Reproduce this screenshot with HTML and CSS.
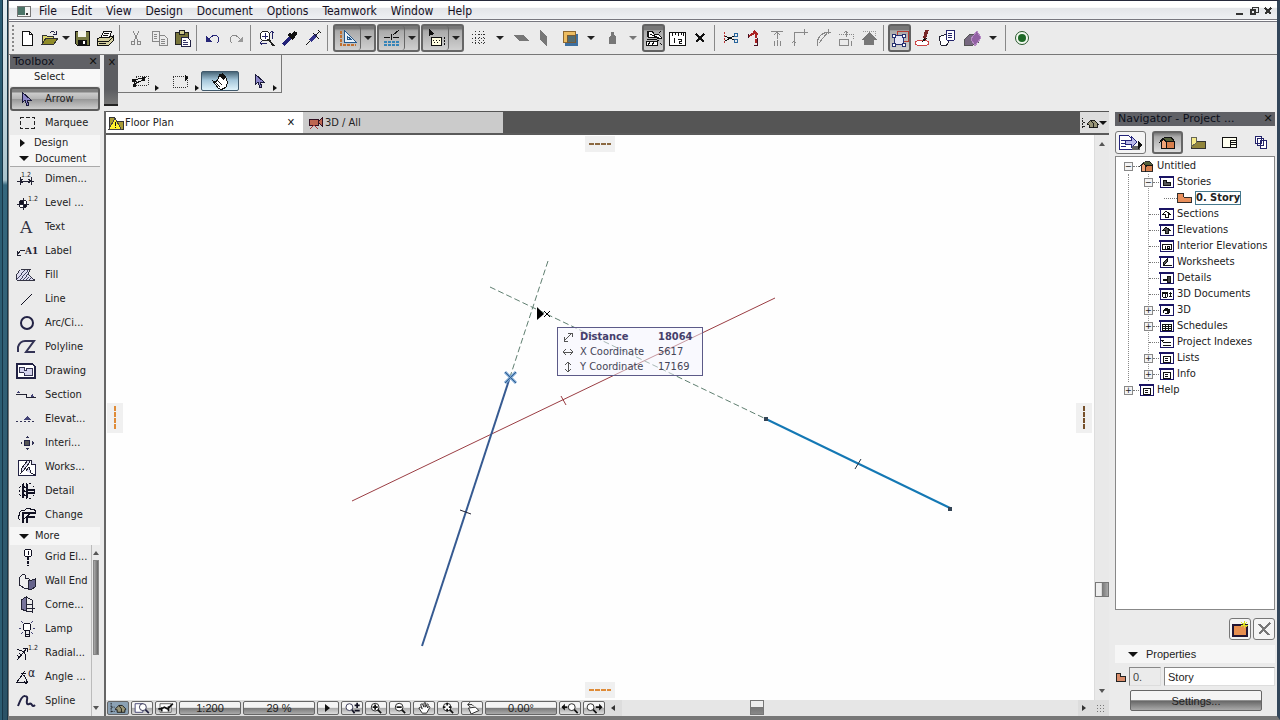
FILE: index.html
```html
<!DOCTYPE html>
<html lang="en">
<head>
  <meta charset="UTF-8" />
  <meta name="viewport" content="width=device-width, initial-scale=1.0" />
  <title>Untitled - Floor Plan</title>
  <link rel="stylesheet" href="styles.css">
</head>
<body>

  <!-- Shared icon shapes -->
  <svg class="defs" aria-hidden="true">
    <symbol id="house" viewBox="0 0 16 14">
      <path d="M6 6h9v7H6z" fill="#d87f4c" stroke="#111"/>
      <path d="M2 7 4 4l3 3v6H2z" fill="#f2a477" stroke="#111"/>
      <path d="m4 4 2-2h6l3 4H7z" fill="#54603a" stroke="#111"/>
      <path d="m0 8 4-5 4 5" fill="none" stroke="#111"/>
    </symbol>
    <symbol id="story" viewBox="0 0 16 12">
      <path d="M1 1h6v4h8v6H1z" fill="#e88f5c" stroke="#222"/>
    </symbol>
    <symbol id="frame" viewBox="0 0 15 12">
      <path d="M1 1h13v10H1z" fill="#fff" stroke="#1a1464"/>
      <path d="M0 1h15" stroke="#1a1464" stroke-width="2"/>
    </symbol>
    <symbol id="cursor" viewBox="0 0 18 18">
      <path d="M5 2v11l3-3 2 6 2-1-2-5h4z" fill="#8c85c8" stroke="#1a1a3a"/>
    </symbol>
    <symbol id="lens" viewBox="0 0 18 14">
      <circle cx="8" cy="6" r="4.500" fill="#fff" stroke="#111"/>
      <path d="m11 9 4 4" stroke="#111" stroke-width="2"/>
    </symbol>
    <symbol id="homemap" viewBox="0 0 20 14">
      <path d="M2 1v11M2 6h4M2 11h4" stroke="#111" stroke-dasharray="2 1"/>
      <path d="m7 8 4-4h4l4 4v1h-1v3H9V9H7z" fill="#999577" stroke="#111"/>
      <path d="m11 4 3 4v4" fill="none" stroke="#111"/>
    </symbol>
    <symbol id="snap" viewBox="0 0 12 12">
      <path d="m2 2 8 8M10 2l-8 8" stroke="#111" stroke-width="2"/>
    </symbol>
  </svg>

  <div class="window">
    <header class="menubar">
      <svg class="app-icon" width="16" height="12" viewBox="0 0 16 12"><path d="M1 1h13v10H1z" fill="#f4f4f4" stroke="#777"/><path d="M2 2h7v8H2z" fill="#4c7468"/><path d="M11 8v2" stroke="#333" stroke-width="2"/></svg>
      <nav class="menus">
        <a href="#">File</a>
        <a href="#">Edit</a>
        <a href="#">View</a>
        <a href="#">Design</a>
        <a href="#">Document</a>
        <a href="#">Options</a>
        <a href="#">Teamwork</a>
        <a href="#">Window</a>
        <a href="#">Help</a>
      </nav>
      <div class="win-buttons">
        <button aria-label="Minimize"><svg width="10" height="10" viewBox="0 0 10 10"><path d="M1 8h7" stroke="#333" stroke-width="2"/></svg></button>
        <button aria-label="Restore"><svg width="10" height="10" viewBox="0 0 10 10"><path d="M3 3V1h6v5H7" fill="none" stroke="#333"/><path d="M2 4h4v4H2z" fill="none" stroke="#333" stroke-width="2"/></svg></button>
        <button aria-label="Close"><svg width="10" height="10" viewBox="0 0 10 10"><path d="m2 2 6 6M8 2 2 8" stroke="#333" stroke-width="2"/></svg></button>
      </div>
    </header>

    <div class="toolbar">
      <span class="handle"></span>
      <button class="tb" aria-label="New"><svg viewBox="0 0 18 18"><path d="M4 2h7l3 3v11H4z" fill="#fff" stroke="#111"/><path d="M11 2v3h3" fill="none" stroke="#111"/></svg></button>
      <button class="tb" aria-label="Open"><svg viewBox="0 0 18 18"><path d="M1 15V6h4l1 1h6v3" fill="#dcd66c" stroke="#333"/><path d="m1 15 4-6h12l-4 6z" fill="#8f8b28" stroke="#333"/><path d="M9 4q3-3 5 0M15 2v3h-3" fill="none" stroke="#224"/></svg></button>
      <button class="drop drop-small" aria-label="Recent files"></button>
      <button class="tb" aria-label="Save"><svg viewBox="0 0 18 18"><path d="M2 2h14v14H4l-2-2z" fill="#777a42" stroke="#111"/><path d="M5 2h8v6H5z" fill="#f4f4ea"/><path d="M5 11h9v5H5z" fill="#111"/><path d="M11 12v3" stroke="#fff" stroke-width="2"/></svg></button>
      <button class="tb" aria-label="Print"><svg viewBox="0 0 18 18"><path d="M5 8 8 2h8l-3 7z" fill="#fff" stroke="#111"/><path d="m1 10 4-2h9l3-1v5l-4 4H1z" fill="#d5d0a0" stroke="#111"/><path d="M1 12h12l4-4M8 4h5M7 6h5M3 14h7" fill="none" stroke="#111"/></svg></button>
      <span class="sep"></span>
      <button class="tb" aria-label="Cut"><svg viewBox="0 0 18 18" class="dim"><path d="m6 2 5 10M12 2 7 12"/><circle cx="6" cy="14" r="2"/><circle cx="12" cy="14" r="2"/></svg></button>
      <button class="tb" aria-label="Copy"><svg viewBox="0 0 18 18" class="dim"><path d="M2 2h7v10H2zM9 6h5l3 3v7H9zM4 5h3M4 7h3M4 9h3M11 10h4M11 12h4M11 14h4"/></svg></button>
      <button class="tb" aria-label="Paste"><svg viewBox="0 0 18 18"><path d="M2 3h13v12H2z" fill="#77743a" stroke="#222"/><path d="M6 1h5v4H6z" fill="#cfc98c" stroke="#222"/><path d="M8 8h6l3 3v6H8z" fill="#fff" stroke="#224"/><path d="M10 11h3M10 13h5M10 15h5" stroke="#336"/></svg></button>
      <span class="sep"></span>
      <button class="tb" aria-label="Undo"><svg viewBox="0 0 18 18"><path d="M5 10q4-5 8-3 4 3 0 7" fill="none" stroke="#262678"/><path d="M2 7v6h6z" fill="#262678"/></svg></button>
      <button class="tb" aria-label="Redo"><svg viewBox="0 0 18 18"><path d="M13 10Q9 5 5 7q-4 3 0 7" fill="none" stroke="#888"/><path d="M16 7v6h-6z" fill="#999"/></svg></button>
      <span class="sep"></span>
      <button class="tb" aria-label="Find and select"><svg viewBox="0 0 18 18"><circle cx="7" cy="7" r="5" fill="#fff" stroke="#222"/><path d="m10 10 6 7" stroke="#222" stroke-width="2"/><path d="M4 7h6M7 4v6M2 14h7M14 2v8M12 4l2-2 2 2M4 12l-2 2 2 2" fill="none" stroke="#226"/></svg></button>
      <button class="tb" aria-label="Pick up parameters"><svg viewBox="0 0 18 18"><path d="m2 16 8-8" stroke="#222278" stroke-width="3"/><path d="m8 5 5 5M11 8l4-5" stroke="#111" stroke-width="4"/></svg></button>
      <button class="tb" aria-label="Inject parameters"><svg viewBox="0 0 18 18"><path d="m2 16 5-5" stroke="#111"/><path d="m6 12 6-6" stroke="#33338a" stroke-width="4"/><path d="m9 4 6 6M12 6l4-4M14 1l3 3" stroke="#111"/></svg></button>
      <span class="sep"></span>

      <div class="pair">
        <button class="on" aria-label="Guide lines"><svg viewBox="0 0 18 18"><path d="M2 2v14h15" fill="none" stroke="#c07030" stroke-width="2" stroke-dasharray="3 1"/><path d="M5 1v12h12z" fill="#e8f0f8" stroke="#24588c"/><path d="M8 7v3h4z" fill="none" stroke="#24588c"/></svg></button>
        <button class="drop" aria-label="Guide line options"></button>
      </div>
      <div class="pair">
        <button class="on" aria-label="Snap guides"><svg viewBox="0 0 18 18"><path d="M1 8h6M10 8h6M8 5v6M10 6l6-5" stroke="#111"/><path d="M1 13h16M1 16h16" stroke="#3584b8" stroke-width="2" stroke-dasharray="3 1"/></svg></button>
        <button class="drop" aria-label="Snap guide options"></button>
      </div>
      <div class="pair">
        <button class="on" aria-label="Tracker"><svg viewBox="0 0 18 18"><path d="M2 0v7l5-2z" fill="#111"/><path d="M4 8h10v8H4z" fill="#fffde0" stroke="#111"/><path d="M6 11h1m2 0h1m2 0h1M7 13h1m2 0h1" stroke="#111"/><path d="M17 8v8" stroke="#111" stroke-dasharray="2 1"/></svg></button>
        <button class="drop" aria-label="Tracker options"></button>
      </div>

      <button class="tb push" aria-label="Grid snap"><svg viewBox="0 0 18 18"><path d="M2 5h14M2 9h14M2 13h14M5 2v14M9 2v14M13 2v14" stroke="#333" stroke-dasharray="1 2"/></svg></button>
      <button class="drop" aria-label="Grid options"></button>
      <button class="tb" aria-label="Editing plane"><svg viewBox="0 0 18 18"><path d="M1 6h10l6 6H7z" fill="#777"/></svg></button>
      <button class="tb" aria-label="Vertical plane"><svg viewBox="0 0 18 18"><path d="m5 1 7 6v10l-7-6z" fill="#777"/></svg></button>
      <button class="tb push" aria-label="Trace"><svg viewBox="0 0 18 18"><path d="M4 5h13v12H4z" fill="#3d6fa0"/><path d="M2 2h12v11H2z" fill="#edbd61" stroke="#8c6831"/><path d="M6 6h8v7H6z" fill="#526b70" stroke="#765a35"/></svg></button>
      <button class="drop" aria-label="Trace options"></button>
      <button class="tb" aria-label="Weight"><svg viewBox="0 0 18 18"><path d="M8 3h3v3l2 2v7H6V8l2-2z" fill="#777"/></svg></button>
      <button class="drop faint" aria-label="Weight options"></button>
      <button class="tb on" aria-label="Suspend groups"><svg viewBox="0 0 18 18"><path d="M2 2h5l2 3h4l4 4-2 1-5-2H3z" fill="#fff" stroke="#111"/><path d="M3 2v6M5 5l9 4M2 10h8l4 2" fill="none" stroke="#111"/><path d="M1 12h11v4H1z" fill="#fff" stroke="#111"/><path d="m3 16 3-4M7 16l3-4M14 4l2-2M15 14l2 2" stroke="#111"/></svg></button>
      <button class="tb" aria-label="Measure"><svg viewBox="0 0 18 18"><path d="M1 3h16v13H1z" fill="#fff" stroke="#111"/><path d="M4 3v4M7 3v3M10 3v4M13 3v3M15 3v4M6 9v5M10 10h3v2h-2v2h3" fill="none" stroke="#111"/></svg></button>
      <button class="tb" aria-label="Snap to point"><svg class="small-icon"><use href="#snap"/></svg></button>
      <span class="sep"></span>
      <button class="tb" aria-label="Split"><svg viewBox="0 0 18 18"><path d="M2 3v12" stroke="#b33" stroke-dasharray="2 1"/><path d="m3 7 9 4M3 12l9-5" stroke="#111"/><circle cx="14" cy="6" r="2" fill="none" stroke="#27659c"/><circle cx="14" cy="12" r="2" fill="none" stroke="#27659c"/></svg></button>
      <button class="tb" aria-label="Adjust"><svg viewBox="0 0 18 18"><path d="m4 7 7-4M9 2l4 4M11 5v4M11 10v4" stroke="#a22" stroke-width="2"/><path d="M3 5v4M9 16h3V9" fill="none" stroke="#412"/></svg></button>
      <button class="tb" aria-label="Elevate"><svg viewBox="0 0 18 18" class="dim"><path d="M3 2h12M9 3v7M6 6l3-3 3 3M6 12v5M9 11v6M12 12v5"/></svg></button>
      <button class="tb" aria-label="Intersect"><svg viewBox="0 0 18 18" class="dim"><path d="M3 17V3h14M1 14l2-2 2 2M13 0v6"/></svg></button>
      <button class="tb" aria-label="Fillet"><svg viewBox="0 0 18 18" class="dim"><path d="M3 17Q3 3 17 3M5 14l9-11M3 12v5M14 0v5"/></svg></button>
      <button class="tb" aria-label="Resize"><svg viewBox="0 0 18 18" class="dim"><path d="M2 10h9v6H2zM14 12v5M9 2v6M7 4l2-2 2 2"/><path d="M2 5h14v6" stroke-dasharray="1 1"/></svg></button>
      <button class="tb" aria-label="Roof"><svg viewBox="0 0 18 18"><path d="m1 11 8-8 8 8h-3v5H4v-5z" fill="#777"/><path d="M3 2h12v5" fill="none" stroke="#999" stroke-dasharray="1 1"/></svg></button>
      <span class="sep"></span>
      <button class="tb on" aria-label="Edit selection"><svg viewBox="0 0 18 18"><path d="M6 2h11v10H6z" fill="none" stroke="#b53b32"/><path d="M3 6h9v9H3z" fill="#e5e5f4" stroke="#273070"/><path d="M1 5h3v3H1zM1 14h3v3H1zM11 14h3v3h-3zM11 5h3v3h-3z" fill="#fff" stroke="#273070"/></svg></button>
      <button class="tb" aria-label="Markup"><svg viewBox="0 0 18 18"><ellipse cx="8" cy="14" rx="7" ry="3" fill="#fff" stroke="#c44"/><path d="m8 13 2-4h3l-3 3z" fill="#111"/><path d="m9 9 2-8h4l-3 9z" fill="#762626"/></svg></button>
      <button class="tb" aria-label="Publish"><svg viewBox="0 0 18 18"><path d="m2 8 7-3 3 8-3 4-5-1z" fill="#fff" stroke="#223"/><path d="M9 1h8v10l-6 1-2-2z" fill="#fff" stroke="#24246b"/><path d="M11 4h4M11 6h4M11 8h4" stroke="#24246b"/></svg></button>
      <button class="tb push" aria-label="Section box"><svg viewBox="0 0 18 18"><path d="m1 11 6-6 7 2 2 6-6 3H1z" fill="#776880" stroke="#555"/><path d="m8 10 6-8 4 7-6 8z" fill="#9261a3" stroke="#b68ac4"/></svg></button>
      <button class="drop" aria-label="Section box options"></button>
      <span class="sep"></span>
      <button class="tb" aria-label="Online"><svg viewBox="0 0 18 18" class="smooth"><circle cx="9" cy="9" r="6.500" fill="#f3faf1" stroke="#29572c"/><circle cx="9" cy="9" r="4" fill="#1e6a27"/></svg></button>
    </div>

    <div class="workspace">
      <aside class="toolbox">
        <div class="panel-title"><span>Toolbox</span><button aria-label="Close toolbox">✕</button></div>
        <h2 class="select-title">Select</h2>
        <button class="tool active"><svg><use href="#cursor"/></svg>Arrow</button>
        <button class="tool"><svg viewBox="0 0 20 18"><path d="M4 3h14v11H4z" fill="none" stroke="#222" stroke-dasharray="4 2"/></svg>Marquee</button>
        <button class="group"><span class="tri-right"></span>Design</button>
        <button class="group last"><span class="tri-down"></span>Document</button>

        <button class="tool"><svg viewBox="0 0 20 18"><text x="5" y="7" class="tiny">1.2</text><path d="M1 11h17M4 7v8M15 7v8M7 9l-3 2 3 2M12 9l3 2-3 2" fill="none" stroke="#223"/></svg>Dimen...</button>
        <button class="tool"><svg viewBox="0 0 20 18"><circle cx="7" cy="10" r="4" fill="#fff" stroke="#223"/><path d="M7 6v4H3q0-4 4-4zM7 10h4q0 4-4 4zM1 10h12M7 4v12" fill="#112" stroke="#223"/><text x="12" y="7" class="tiny">1.2</text></svg>Level ...</button>
        <button class="tool"><svg viewBox="0 0 20 18"><text x="4" y="15" class="letter">A</text></svg>Text</button>
        <button class="tool"><svg viewBox="0 0 20 18"><path d="m1 13 4-5h4M1 9v4h4" fill="none" stroke="#223"/><text x="9" y="12" class="label-a">A1</text></svg>Label</button>
        <button class="tool"><svg viewBox="0 0 22 18"><path d="M1 15V8l4-5h11l-3 5 8 7z" fill="#dddcf0" stroke="#223"/><path d="m1 14 9-11M4 15 14 3M8 15l6-8M11 15l4-4M14 15l3-3" stroke="#335"/></svg>Fill</button>
        <button class="tool"><svg viewBox="0 0 20 18"><path d="M5 15 16 4" stroke="#112"/></svg>Line</button>
        <button class="tool"><svg viewBox="0 0 20 18" class="smooth"><circle cx="11" cy="9" r="6" fill="none" stroke="#224" stroke-width="2"/></svg>Arc/Ci...</button>
        <button class="tool"><svg viewBox="0 0 20 18" class="smooth"><path d="M2 14V9q2-6 7-6h9l-8 11h9" fill="none" stroke="#335" stroke-width="2"/></svg>Polyline</button>
        <button class="tool"><svg viewBox="0 0 22 18"><path d="M1 1h17l3 3v13H1z" fill="#fff" stroke="#224" stroke-width="2"/><path d="M4 5h5v3h3V6h6v8H9v-3H4z" fill="#d4d3ed" stroke="#224"/></svg>Drawing</button>
        <button class="tool"><svg viewBox="0 0 22 18"><path d="M0 8h12v4h10" fill="none" stroke="#112"/><path d="m1 7 2-3 2 3zM16 11l2-3 2 3z" fill="#447"/></svg>Section</button>
        <button class="tool"><svg viewBox="0 0 20 18"><path d="M0 11h20" stroke="#335" stroke-dasharray="2 2"/><path d="m7 10 4-4 4 4z" fill="#447"/></svg>Elevat...</button>
        <button class="tool"><svg viewBox="0 0 20 18"><circle cx="11" cy="9" r="3" fill="#555" stroke="#224"/><path d="m9 4 2-2 2 2zM9 14l2 2 2-2zM6 7 4 9l2 2zM16 7l2 2-2 2z" fill="#335"/></svg>Interi...</button>
        <button class="tool"><svg viewBox="0 0 20 18"><path d="M2 2h13l4 4v11H2z" fill="#fff" stroke="#224"/><path d="m15 2v4h4M5 15l1-5 6-8 2 2-7 9zM10 13l3-4 2 6 4 2" fill="#dddcf0" stroke="#223"/></svg>Works...</button>
        <button class="tool"><svg viewBox="0 0 20 18"><circle cx="11" cy="9" r="8" fill="none" stroke="#112" stroke-dasharray="2 2"/><path d="M7 2v14M11 2v14M11 8h8M11 11h8" stroke="#112" stroke-width="2"/><path d="m7 4 3 2M7 8l3 2M7 12l3 2" stroke="#112"/></svg>Detail</button>
        <button class="tool"><svg viewBox="0 0 20 18"><path d="M4 14q-4-3 0-5-1-5 4-4 3-5 8-1 4-1 4 3" fill="none" stroke="#112"/><path d="M7 17V7h13M11 17v-6h8" fill="none" stroke="#112" stroke-width="2"/><path d="m7 14 4-4M10 11l5-4" stroke="#112"/></svg>Change</button>

        <button class="group more"><span class="tri-down"></span>More</button>
        <div class="more-tools">
          <div class="more-list">
            <button class="tool"><svg viewBox="0 0 20 18"><circle cx="12" cy="5" r="4" fill="#fff" stroke="#112"/><path d="M12 3v4" stroke="#112"/><path d="M12 9v9" stroke="#112" stroke-width="2" stroke-dasharray="3 1"/></svg>Grid El...</button>
            <button class="tool"><svg viewBox="0 0 20 18"><path d="m3 6 4-4 2 1v3l4 1v9l-3 1-7-4z" fill="#eee" stroke="#223"/><path d="M12 8h4l3-1v8l-3 2h-4z" fill="#66648c" stroke="#223"/></svg>Wall End</button>
            <button class="tool"><svg viewBox="0 0 20 18"><path d="m5 4 5-3v14l-5-2z" fill="#77749b" stroke="#223"/><path d="m10 1 6 3v12l-6-1M11 8h5M11 12h8" fill="none" stroke="#223"/></svg>Corne...</button>
            <button class="tool"><svg viewBox="0 0 20 18"><circle cx="11" cy="7" r="4" fill="#fff" stroke="#112"/><path d="M9 11v5h4v-5M9 14h4" fill="none" stroke="#112"/><path d="m5 1 2 2M17 1l-2 2M3 8h2M17 8h2M5 14l2-2M17 14l-2-2" stroke="#447"/></svg>Lamp</button>
            <button class="tool"><svg viewBox="0 0 20 18"><path d="M1 6q9-1 9 10M1 16l10-12M7 4h4v4M1 11l3 3M3 9l3 3" fill="none" stroke="#112"/><text x="12" y="6" class="tiny">1.2</text></svg>Radial...</button>
            <button class="tool"><svg viewBox="0 0 20 18"><path d="M9 3 1 14h10M6 6q5 3 4 8M5 5h5M8 13l2 3 2-3" fill="none" stroke="#112"/><text x="12" y="9" class="alpha">α</text></svg>Angle ...</button>
            <button class="tool"><svg viewBox="0 0 20 18" class="smooth"><path d="M2 14q4-11 7-10 3 0 2 4-1 5 2 4 2-1 3 1t3 0" fill="none" stroke="#224" stroke-width="2"/></svg>Spline</button>
          </div>
          <div class="mini-scroll"><span class="up"></span><span class="mini-thumb"></span><span class="down"></span></div>
        </div>
      </aside>

      <div class="main">
        <div class="infobox">
          <div class="info-handle"><button aria-label="Close info box">✕</button></div>
          <div class="info-tools">
            <button class="info" aria-label="Single element"><svg viewBox="0 0 20 18"><path d="M5 4h12v9H5z" fill="none" stroke="#333" stroke-dasharray="1 1"/><path d="M3 14V8l12-3M3 12l9-4" fill="none" stroke="#111"/><path d="M1 7h4v3H1zM2 12h3v3H2zM11 6h3v3h-3z" fill="#111"/></svg></button>
            <button class="info" aria-label="Marquee area"><svg viewBox="0 0 20 18"><path d="M2 4h14v11H2z" fill="none" stroke="#333" stroke-dasharray="1 1"/><path d="m14 3 4 3-4 3z" fill="#111"/></svg></button>
            <button class="info pressed" aria-label="Quick selection"><svg viewBox="0 0 20 18"><path d="m10 2 3 3 2-1q4 6 1 11-4 4-8 1L3 9l3 1 2-3z" fill="#fff" stroke="#111"/><path d="M9 4 12 1l4 4-3 3z" fill="#111"/><path d="m5 10 5 5M7 8l5 5" stroke="#111"/></svg></button>
            <button class="info" aria-label="Arrow method"><svg><use href="#cursor"/></svg></button>
          </div>
        </div>

        <div class="lower">
          <section class="view">
            <div class="tabs">
              <div class="tab current">
                <svg width="16" height="14" viewBox="0 0 16 14"><path d="M1 1h5v4h9v8H1z" fill="#aa9c35" stroke="#333"/><path d="m7 2 6 11H1z" fill="#fff22e" stroke="#444"/><path d="M7 6v4M7 11v1" stroke="#111"/></svg>
                <a href="#">Floor Plan</a>
                <button aria-label="Close tab">✕</button>
              </div>
              <div class="tab">
                <svg width="16" height="14" viewBox="0 0 16 14"><path d="M1 3h9v6H1zM10 6l4-4v8z" fill="#be6650" stroke="#312"/><path d="m6 9-4 4M6 9l4 4" stroke="#a33"/></svg>
                <a href="#">3D / All</a>
              </div>
              <button class="tab-menu" aria-label="Navigator menu"><svg width="18" height="14"><use href="#homemap"/></svg><span class="tri-down"></span></button>
            </div>

            <div class="view-body">
              <div class="canvas">
                <svg class="drawing smooth">
                  <path d="M246 366 669 163M455 261l5 9" stroke="#9a3d43"/>
                  <path d="m384 152 276 132M442 126l-38 116" stroke="#5f7e70" stroke-dasharray="6 3"/>
                  <path d="m404 242-88 269" stroke="#365a91" stroke-width="2"/>
                  <path d="m354 375 11 4" stroke="#223"/>
                  <path d="m660 284 184 89" stroke="#1478b4" stroke-width="2"/>
                  <path d="m755 324-6 10" stroke="#234"/>
                  <path d="M658 282h4v4h-4zM842 372h4v4h-4z" fill="#345"/>
                  <path d="m399 237 11 11M410 237l-11 11" stroke="#78a4d2" stroke-width="3"/>
                  <path d="m399 237 11 11M410 237l-11 11" stroke="#345f8e"/>
                  <path d="M431 172v13l7-6z" fill="#000"/>
                  <path d="m438 176 6 6M444 176l-6 6" stroke="#000"/>
                </svg>
                <span class="edge top"></span>
                <span class="edge bottom"></span>
                <span class="edge left"></span>
                <span class="edge right"></span>
                <dl class="tracker">
                  <div class="strong"><dt><svg viewBox="0 0 12 12"><path d="m2 10 8-8M6 2h4v4M2 6v4h4"/></svg>Distance</dt><dd>18064</dd></div>
                  <div><dt><svg viewBox="0 0 12 12"><path d="M1 6h10M4 3 1 6l3 3M8 3l3 3-3 3"/></svg>X Coordinate</dt><dd>5617</dd></div>
                  <div><dt><svg viewBox="0 0 12 12"><path d="M6 1v10M3 4l3-3 3 3M3 8l3 3 3-3"/></svg>Y Coordinate</dt><dd>17169</dd></div>
                </dl>
              </div>
              <div class="vscroll"><span class="up"></span><span class="thumb"></span><span class="down"></span></div>
            </div>

            <footer class="statusbar">
              <button class="sb blue" aria-label="Quick options"><svg><use href="#homemap"/></svg></button>
              <button class="sb" aria-label="Zoom preview"><svg viewBox="0 0 20 14"><path d="M2 2h9v10H2z" fill="#fff" stroke="#336"/><circle cx="11" cy="6" r="4" fill="#fff" stroke="#224"/><path d="m14 9 4 4" stroke="#224" stroke-width="2"/></svg></button>
              <button class="sb" aria-label="Floor plan options"><svg viewBox="0 0 20 14"><path d="M3 2h13v10H3z" fill="#fff" stroke="#555"/><path d="M1 8h4l3-2 4 2 6-6M5 6v5M13 5v6" fill="none" stroke="#111" stroke-width="2"/></svg></button>
              <button class="sb scale">1:200</button>
              <button class="sb wide">29 %</button>
              <button class="sb" aria-label="Play"><span class="tri-right"></span></button>
              <button class="sb" aria-label="Zoom"><svg viewBox="0 0 20 14"><circle cx="7" cy="6" r="4" fill="#fff" stroke="#224"/><path d="m10 9 3 4M13 4h6M16 1v6M13 10h6" stroke="#112" stroke-width="2"/></svg></button>
              <button class="sb" aria-label="Zoom in"><svg viewBox="0 0 18 14"><use href="#lens"/><path d="M5 6h6M8 3v6" stroke="#111" stroke-width="2"/></svg></button>
              <button class="sb" aria-label="Zoom out"><svg viewBox="0 0 18 14"><use href="#lens"/><path d="M5 6h6" stroke="#111" stroke-width="2"/></svg></button>
              <button class="sb" aria-label="Pan"><svg viewBox="0 0 18 14"><path d="m3 7 2-1 2 2-2-5 2-1 2 4V1h2v5l2-4 1 1-1 4 2-2 1 1-4 7H7z" fill="#fff" stroke="#111"/></svg></button>
              <button class="sb" aria-label="Fit in window"><svg viewBox="0 0 18 14"><use href="#lens"/><path d="M8 1v3M8 8v3M3 6h3M10 6h3" stroke="#111" stroke-width="2"/></svg></button>
              <button class="sb" aria-label="Orientation"><svg viewBox="0 0 18 14"><path d="m5 7 8-1 4 4-9 4z" fill="#fff" stroke="#111"/><path d="M4 3h5l2 2M7 0 4 3l3 3" fill="none" stroke="#111"/></svg></button>
              <button class="sb wide">0.00°</button>
              <button class="sb" aria-label="Previous zoom"><svg viewBox="0 0 20 14"><path d="M1 6h6" stroke="#111" stroke-width="2"/><path d="m0 6 4-4v8z" fill="#111"/><circle cx="12" cy="6" r="4" fill="#fff" stroke="#111"/><path d="m15 9 4 4" stroke="#111" stroke-width="2"/></svg></button>
              <button class="sb" aria-label="Next zoom"><svg viewBox="0 0 20 14"><circle cx="6" cy="6" r="4" fill="#fff" stroke="#111"/><path d="m9 9 4 4M12 6h6" stroke="#111" stroke-width="2"/><path d="m20 6-4-4v8z" fill="#111"/></svg></button>
              <div class="hscroll"><span class="prev"></span><span class="track"><span class="thumb"></span></span><span class="next"></span></div>
              <span class="grip"></span>
            </footer>
          </section>

          <aside class="navigator">
            <div class="panel-title"><span>Navigator - Project ...</span><button aria-label="Close navigator">✕</button></div>
            <div class="nav-buttons">
              <button class="framed" aria-label="Project chooser"><svg viewBox="0 0 26 18"><path d="M2 2h9l4 4v10H2z" fill="#fff" stroke="#23237a"/><path d="M4 7h5M4 10h5M4 13h5" stroke="#23237a"/><path d="M8 7h6V3l6 6-6 6v-4H8z" fill="#b9b9e8" stroke="#23237a"/><path d="M15 13h8v4h-8z" fill="#666"/><path d="m21 8 4 4-4 4z" fill="#111"/></svg></button>
              <button class="framed chosen" aria-label="Project map"><svg width="16" height="14"><use href="#house"/></svg></button>
              <button aria-label="View map"><svg width="16" height="14" viewBox="0 0 16 14"><path d="M1 2h5v4h9v7H1z" fill="#91853b" stroke="#333"/><path d="M1 2h5v6l-5 4z" fill="#f6eb8a" stroke="#665"/></svg></button>
              <button aria-label="Layout book"><svg width="16" height="14" viewBox="0 0 16 14"><path d="M1 2h14v10H1z" fill="#fffff0" stroke="#111"/><path d="M9 5h6M9 5v7M10 7h5M10 9h5" stroke="#111"/></svg></button>
              <button aria-label="Publisher sets"><svg width="16" height="14" viewBox="0 0 16 14"><path d="M3 1h6v7H3zM5 3h6v7H5zM8 5h6v8H8z" fill="#fff" stroke="#22226a"/></svg></button>
            </div>

            <ul class="tree">
              <li><button class="box">−</button><i></i><svg><use href="#house"/></svg>Untitled
                <ul class="branch">
                  <li><button class="box">−</button><i></i><svg viewBox="0 0 15 12"><use href="#frame"/><path d="M4 4h3v2h4v3H4z" fill="#555" stroke="#111"/></svg>Stories
                    <ul>
                      <li class="leaf"><i></i><svg><use href="#story"/></svg><b>0. Story</b></li>
                    </ul>
                  </li>
                  <li class="leaf"><i></i><svg viewBox="0 0 15 12"><use href="#frame"/><path d="m4 6 3-3 4 3H9v3H6V6z" fill="#fff" stroke="#111"/></svg>Sections</li>
                  <li class="leaf"><i></i><svg viewBox="0 0 15 12"><use href="#frame"/><path d="m4 6 3-3 4 3H9v3H6V6z" fill="#555" stroke="#111"/></svg>Elevations</li>
                  <li class="leaf"><i></i><svg viewBox="0 0 15 12"><use href="#frame"/><path d="M3 4h9v5H3zM6 9V6M8 6h2v2H8z" fill="none" stroke="#111"/></svg>Interior Elevations</li>
                  <li class="leaf"><i></i><svg viewBox="0 0 15 12"><use href="#frame"/><path d="m4 9 1-3 3-3v3L5 9h8" fill="#555" stroke="#111"/></svg>Worksheets</li>
                  <li class="leaf"><i></i><svg viewBox="0 0 15 12"><use href="#frame"/><path d="M4 7h4V4h3v6H8V8H4z" fill="#444" stroke="#111"/></svg>Details</li>
                  <li class="leaf"><i></i><svg viewBox="0 0 15 12"><use href="#frame"/><path d="m3 5 3-1 3 1-1 4-2 1-2-1zM3 5l3 1v4M6 6l3-1M11 4v5M10 5h3M10 8h3" fill="none" stroke="#111"/></svg>3D Documents</li>
                  <li><button class="box">+</button><i></i><svg viewBox="0 0 15 12"><use href="#frame"/><path d="m4 6 3-2 4 1v4l-3 1-4-1z" fill="#111"/><path d="M5 7h3v2H5z" fill="#fff"/></svg>3D</li>
                  <li><button class="box">+</button><i></i><svg viewBox="0 0 15 12"><use href="#frame"/><path d="M3 4h9v6H3zM3 6h9M3 8h9M6 4v6M9 4v6" fill="none" stroke="#111"/></svg>Schedules</li>
                  <li class="leaf"><i></i><svg viewBox="0 0 15 12"><use href="#frame"/><path d="M2 4h3M4 6h8M4 9h8M3 4v2" stroke="#111"/></svg>Project Indexes</li>
                  <li><button class="box">+</button><i></i><svg viewBox="0 0 15 12"><use href="#frame"/><path d="M4 4h7v6H4zM6 6h3M6 8h3" fill="none" stroke="#111"/></svg>Lists</li>
                  <li><button class="box">+</button><i></i><svg viewBox="0 0 15 12"><use href="#frame"/><path d="M4 4h7v6H4zM6 6h3M6 8h3" fill="none" stroke="#111"/></svg>Info</li>
                </ul>
              </li>
              <li><button class="box">+</button><i></i><svg viewBox="0 0 15 12"><use href="#frame"/><path d="M4 4h7v6H4zM6 6h3M6 8h3" fill="none" stroke="#111"/></svg>Help</li>
            </ul>

            <div class="tree-actions">
              <button aria-label="New story"><svg width="18" height="18" viewBox="0 0 18 18"><path d="M2 5h14v11H2z" fill="#e78f50" stroke="#221634" stroke-width="2"/><path d="M10 5h7M13 1v7M10 2l6 5M16 2l-6 5" stroke="#d8df28"/></svg></button>
              <button aria-label="Delete"><svg width="18" height="18" viewBox="0 0 18 18"><path d="m4 4 10 11M15 3 4 14" stroke="#777" stroke-width="2"/></svg></button>
            </div>
            <button class="properties"><span class="tri-down"></span>Properties</button>
            <div class="fields">
              <svg width="11" height="10" viewBox="0 0 11 10"><path d="M1 1h4v3h5v5H1z" fill="#d98c69" stroke="#222"/></svg>
              <input class="number" aria-label="Story number" value="0." readonly>
              <input class="name" aria-label="Story name" value="Story">
            </div>
            <button class="settings">Settings...</button>
          </aside>
        </div>
      </div>
    </div>
  </div>

</body>
</html>
```
FILE: styles.css
```css
* {
  box-sizing: border-box;
}

body {
  margin: 0;
  padding-left: 8px;
  background:
    linear-gradient(#e4edf0, #a9c3cc 180px, #35687e 185px, #2a5266) 3px 0 / 4px 100% no-repeat,
    linear-gradient(90deg, #2b5c72 2px, #173647 2px, #173647 8px, #33465a 8px);
  font-family: "DejaVu Sans Condensed", "DejaVu Sans", sans-serif;
  font-size: 11px;
  line-height: 16px;
  color: #222;
}

button, input {
  font: inherit;
  color: inherit;
  margin: 0;
  padding: 0;
  border: 0;
  background: none;
  border-radius: 0;
}

a {
  color: inherit;
  text-decoration: none;
}

svg {
  display: block;
  flex: none;
  shape-rendering: crispEdges;
}

.smooth {
  shape-rendering: auto;
}

.defs {
  position: absolute;
  width: 0;
  height: 0;
}

.window {
  display: flex;
  flex-direction: column;
  height: 100vh;
  background: #ebebeb;
  border-top: 1px solid #25283a;
  border-right: 3px solid #33465a;
  border-bottom: 4px solid #777;
  border-left: 1px solid #777;
}

/* menu bar */
.menubar {
  display: flex;
  align-items: center;
  flex: none;
  height: 21px;
  padding: 2px 4px 0 7px;
  background: linear-gradient(#fff 35%, #e3e5e9 40%, #eef0f3);
  border-bottom: 3px double #77777f;
}

.menus {
  display: flex;
  gap: 14px;
  margin-left: 7px;
  font-size: 12px;
  color: #15101f;
}

.win-buttons {
  display: flex;
  gap: 4px;
  margin-left: auto;
}

/* main toolbar */
.toolbar {
  display: flex;
  align-items: center;
  flex: none;
  height: 33px;
  padding-left: 3px;
  border-bottom: 1px solid #777;
}

.handle {
  height: 26px;
  margin-right: 1px;
  border-left: 2px dotted #888;
}

.tb {
  display: grid;
  place-items: center;
  width: 23px;
  height: 28px;
}

.tb svg, .pair svg {
  width: 18px;
  height: 18px;
}

.tb .small-icon {
  width: 12px;
  height: 12px;
}

.push {
  margin-left: 3px;
}

.dim {
  fill: none;
  stroke: #888;
}

.sep {
  width: 1px;
  height: 26px;
  margin: 0 4px 0 3px;
  background: #888;
}

.drop {
  display: grid;
  place-items: center;
  width: 19px;
  height: 28px;
}

.drop::after {
  content: "";
  border: 4px solid transparent;
  border-top-color: #222;
  border-bottom: 0;
}

.drop-small {
  width: 9px;
}

.faint::after {
  border-top-color: #777;
}

.on {
  background: linear-gradient(#777 15%, #a9a9a9 20%, #d0d0d0);
  border: 2px solid #626262;
  border-radius: 3px;
}

.pair {
  display: flex;
  width: 43px;
  height: 28px;
  margin-left: 1px;
  border: 2px solid #666;
  border-radius: 3px;
  background: linear-gradient(#777 10%, #aaa 20%, #d0d0d0);
}

.pair .on {
  display: grid;
  place-items: center;
  width: 26px;
  height: 24px;
  border: 0;
  border-right: 1px solid #666;
  background: none;
}

.pair .drop {
  width: 13px;
  height: 24px;
}

/* palettes */
.workspace {
  display: flex;
  flex: 1;
  min-height: 0;
}

.panel-title {
  display: flex;
  justify-content: space-between;
  align-items: center;
  flex: none;
  height: 14px;
  padding: 0 2px 0 3px;
  background: #606166;
  color: #0c0f1a;
  font-family: "DejaVu Sans", sans-serif;
}

.panel-title button, .info-handle button {
  width: 10px;
  line-height: 14px;
  color: #111;
}

.toolbox {
  display: flex;
  flex-direction: column;
  flex: none;
  width: 91px;
  padding-left: 1px;
  overflow: hidden;
}

.select-title {
  flex: none;
  height: 17px;
  margin: 0 0 1px;
  padding-left: 24px;
  background: #f8f8f8;
  font-size: 11px;
  font-weight: normal;
}

.tool {
  display: flex;
  align-items: center;
  flex: none;
  width: 100%;
  height: 24px;
  padding-left: 6px;
  gap: 9px;
  text-align: left;
  white-space: nowrap;
}

.tool svg {
  width: 20px;
  height: 18px;
  overflow: visible;
}

.active {
  background: linear-gradient(#808080 15%, #ccc 20%, #b5b5b5 48%, #999 52%, #ccc);
  border: 2px solid #5c5c5c;
  border-radius: 3px;
  padding-left: 4px;
}

.tiny {
  font-size: 7px;
  fill: #222;
}

.letter {
  font-family: "DejaVu Serif", serif;
  font-size: 17px;
  fill: #334;
}

.label-a {
  font-family: "DejaVu Serif", serif;
  font-size: 9px;
  font-weight: bold;
  fill: #223;
}

.alpha {
  font-size: 12px;
  fill: #223;
}

.group, .properties {
  display: flex;
  align-items: center;
  flex: none;
  gap: 6px;
  height: 16px;
  padding-left: 9px;
  background: #f6f6f6;
}

.group.last {
  border-bottom: 1px solid #aaa;
}

.more {
  height: 18px;
}

.tri-down {
  width: 9px;
  border: 5px solid transparent;
  border-top-color: #111;
  border-bottom: 0;
}

.tri-right {
  width: 8px;
  border: 4px solid transparent;
  border-left: 5px solid #111;
  border-right: 0;
  margin-left: 1px;
}

.more-tools {
  display: flex;
  flex: 1;
  min-height: 0;
}

.more-list {
  flex: 1;
  min-width: 0;
  overflow: hidden;
}

.mini-scroll {
  display: flex;
  flex-direction: column;
  align-items: center;
  width: 9px;
  padding: 6px 0;
  border-left: 1px solid #bbb;
}

.mini-thumb {
  width: 6px;
  height: 95px;
  margin: 5px 0 auto;
  border: 1px solid #888;
  background: linear-gradient(90deg, #aaa, #666);
}

.up, .down {
  border: 3px solid transparent;
}

.up {
  border-bottom: 4px solid #555;
  border-top: 0;
}

.down {
  border-top: 4px solid #555;
  border-bottom: 0;
}

.main {
  display: flex;
  flex-direction: column;
  flex: 1;
  min-width: 0;
  padding-left: 4px;
}

/* info box */
.infobox {
  display: flex;
  flex: none;
  height: 51px;
}

.info-handle {
  width: 14px;
  padding-left: 3px;
  background: linear-gradient(#5c5d61 70%, #777);
  border-bottom: 2px solid #222;
}

.info-tools {
  display: flex;
  align-items: center;
  height: 38px;
  padding: 14px 2px 0 3px;
  border-right: 1px solid #777;
  border-bottom: 1px solid #777;
}

.info {
  display: flex;
  align-items: center;
  justify-content: center;
  width: 40px;
  height: 20px;
}

.info:not(.pressed) {
  padding-left: 8px;
}

.info:not(.pressed)::after {
  content: "";
  align-self: end;
  margin-left: 4px;
  border: 3px solid transparent;
  border-left: 4px solid #111;
  border-right: 0;
}

.info svg {
  width: 20px;
  height: 18px;
}

.pressed {
  width: 38px;
  background: linear-gradient(#486678, #a4c6da 45%, #dff2fb);
  border: 1px solid #40596c;
  border-radius: 2px;
}

.lower {
  display: flex;
  flex: 1;
  min-height: 0;
  margin-top: 5px;
}

/* drawing view */
.view {
  display: flex;
  flex-direction: column;
  flex: 1;
  min-width: 0;
  border-left: 2px solid #666;
}

.tabs {
  display: flex;
  flex: none;
  height: 24px;
  background: #555;
  border-top: 1px solid #555;
  border-bottom: 2px solid #5a5a5a;
}

.tab {
  display: flex;
  align-items: center;
  width: 200px;
  padding-left: 5px;
  background: #cbcbcb;
}

.tab a {
  margin-left: 1px;
}

.tab.current {
  width: 197px;
  padding: 0 7px 0 2px;
  background: #fff;
}

.tab button {
  width: 10px;
  margin-left: auto;
}

.tab-menu {
  display: flex;
  align-items: center;
  width: 29px;
  margin-left: auto;
  padding-left: 1px;
  background: #ddd;
}

.tab-menu .tri-down {
  width: 8px;
  border-width: 4px 4px 0;
}

.view-body {
  display: flex;
  flex: 1;
  min-height: 0;
}

.canvas {
  position: relative;
  flex: 1;
  min-width: 0;
  background: #fefefe;
}

.drawing {
  width: 100%;
  height: 100%;
  fill: none;
}

.edge {
  position: absolute;
  width: 30px;
  height: 16px;
  background: #f0f0f0;
}

.edge::after {
  content: "";
  position: absolute;
  inset: 7px 4px;
  background: repeating-linear-gradient(90deg, #df8b37 0 5px, transparent 5px 6px);
}

.top, .bottom {
  left: calc(50% - 15px);
}

.top {
  top: 1px;
}

.bottom {
  bottom: 2px;
}

.left, .right {
  top: calc(50% - 15px);
  width: 16px;
  height: 30px;
}

.left {
  left: 1px;
}

.right {
  right: 2px;
}

.left::after, .right::after {
  inset: 3px 7px;
  background: repeating-linear-gradient(#df8b37 0 5px, transparent 5px 6px);
}

.top::after {
  background: repeating-linear-gradient(90deg, #8b6840 0 5px, transparent 5px 6px);
}

.right::after {
  background: repeating-linear-gradient(#76502a 0 5px, transparent 5px 6px);
}

.tracker {
  position: absolute;
  left: 451px;
  top: 192px;
  width: 146px;
  margin: 0;
  padding: 1px 4px;
  border: 1px solid #5c5a88;
  background: rgba(244, 243, 254, 0.5);
  color: #454557;
  line-height: 15px;
}

.tracker div, .tracker dt {
  display: flex;
  align-items: center;
}

.tracker dt {
  width: 96px;
  gap: 6px;
  white-space: nowrap;
}

.tracker dd {
  margin: 0;
}

.tracker svg {
  width: 12px;
  height: 12px;
  fill: none;
  stroke: #555;
}

.strong {
  font-weight: bold;
  color: #45406c;
}

.vscroll {
  display: flex;
  flex-direction: column;
  align-items: center;
  width: 15px;
  padding: 7px 0;
  background: #e9e9e9;
  border-left: 1px solid #ddd;
}

.thumb {
  width: 14px;
  height: 15px;
  border: 1px solid #777;
  background: linear-gradient(90deg, #eee 45%, #777 50%, #aaa);
}

.vscroll .thumb {
  margin: auto 0 92px;
}

/* status bar */
.statusbar {
  display: flex;
  align-items: center;
  flex: none;
  gap: 2px;
  height: 16px;
  padding-left: 1px;
  background: #ddd;
}

.sb {
  display: grid;
  place-items: center;
  flex: none;
  width: 22px;
  height: 14px;
  border: 1px solid #666;
  border-radius: 2px;
  background: linear-gradient(#f4f4f4 45%, #aaa 50%, #ddd);
  line-height: 12px;
}

.sb svg {
  width: 18px;
  height: 12px;
  shape-rendering: auto;
}

.scale, .wide {
  width: 62px;
  background: linear-gradient(#f4f4f4 45%, #777 50%, #aaa);
  font-family: "Liberation Sans", sans-serif;
}

.wide {
  width: 72px;
}

.blue {
  background: #8ba1b4;
}

.hscroll {
  display: flex;
  align-items: center;
  flex: 1;
  height: 16px;
  padding: 0 8px 0 4px;
}

.track {
  flex: 1;
  height: 16px;
  margin: 0 4px 0 7px;
  padding-left: 27%;
  background: #e6e6e6;
}

.track .thumb {
  display: block;
  background: linear-gradient(#eee 45%, #777 50%, #888);
}

.prev, .next {
  border: 3px solid transparent;
}

.prev {
  border-right: 4px solid #333;
  border-left: 0;
}

.next {
  border-left: 4px solid #333;
  border-right: 0;
}

.grip {
  width: 9px;
  height: 9px;
  margin-right: 4px;
  background: radial-gradient(#777 1px, transparent 1px) 0 0 / 3px 3px;
}

/* navigator */
.navigator {
  display: flex;
  flex-direction: column;
  flex: none;
  width: 168px;
  padding: 1px 2px 0 6px;
}

.nav-buttons {
  display: flex;
  align-items: center;
  flex: none;
  height: 30px;
  padding-top: 2px;
}

.nav-buttons button {
  display: grid;
  place-items: center;
  width: 31px;
  height: 23px;
}

.nav-buttons .framed {
  margin-right: 6px;
  border: 1px solid #777;
  border-radius: 3px;
  background: #f4f4f4;
}

.framed svg:not([width]) {
  width: 26px;
  height: 18px;
}

.nav-buttons .chosen {
  margin-right: 0;
  border: 2px solid #666;
  background: linear-gradient(#777, #aaa 20%, #ddd);
}

.tree, .tree ul {
  margin: 0;
  padding: 0;
  list-style: none;
}

.tree {
  flex: 1;
  min-height: 0;
  padding: 1px 0 0 8px;
  border: 1px solid #888;
  background: #fff;
  overflow: hidden;
}

.tree ul {
  margin-left: 4px;
  padding-left: 15px;
  border-left: 1px dotted #888;
}

/* dotted trunk through the boxes of the second level */
.tree .branch > li {
  background: repeating-linear-gradient(#999 0 1px, transparent 1px 2px) 4px 0 / 1px 100% no-repeat;
}

.tree .branch ul {
  border-left: 0;
  padding-left: 16px;
}

.tree li {
  white-space: nowrap;
}

.tree li > svg, .tree i, .box, .tree b {
  display: inline-block;
  vertical-align: middle;
}

.tree li > svg {
  width: 15px;
  height: 12px;
  margin: 0 3px 0 0;
}

.box {
  width: 9px;
  height: 9px;
  border: 1px solid #888;
  background: #f4f4f4;
  font-size: 9px;
  line-height: 7px;
}

.tree i {
  width: 6px;
  border-top: 1px dotted #777;
}

.leaf i {
  width: 10px;
  margin-left: 5px;
}

.tree ul ul i {
  width: 13px;
  margin-left: 0;
}

.tree b {
  border: 1px solid #45788d;
  line-height: 12px;
}

.tree-actions {
  display: flex;
  justify-content: flex-end;
  flex: none;
  gap: 2px;
  padding: 8px 0 5px;
}

.tree-actions button {
  display: grid;
  place-items: center;
  width: 22px;
  height: 22px;
  border: 1px solid #777;
  border-radius: 3px;
  background: #f5f5f5;
}

.properties {
  height: 18px;
  gap: 8px;
  padding-left: 13px;
  font-family: "Liberation Sans", sans-serif;
}

.fields {
  display: flex;
  align-items: center;
  flex: none;
  height: 19px;
  margin-top: 4px;
  font-family: "Liberation Sans", sans-serif;
}

.fields input {
  min-width: 0;
  height: 19px;
  padding-left: 3px;
  border: 1px solid #888;
  border-right-color: #ddd;
  border-bottom-color: #ddd;
}

.number {
  width: 32px;
  margin: 0 3px;
  color: #444;
}

.name {
  flex: 1;
  background: #fff;
}

.settings {
  flex: none;
  height: 21px;
  margin: 4px 13px 5px 15px;
  border: 1px solid #666;
  border-radius: 2px;
  background: linear-gradient(#f4f4f4 45%, #666 52%, #aaa);
  font-family: "Liberation Sans", sans-serif;
}
```
